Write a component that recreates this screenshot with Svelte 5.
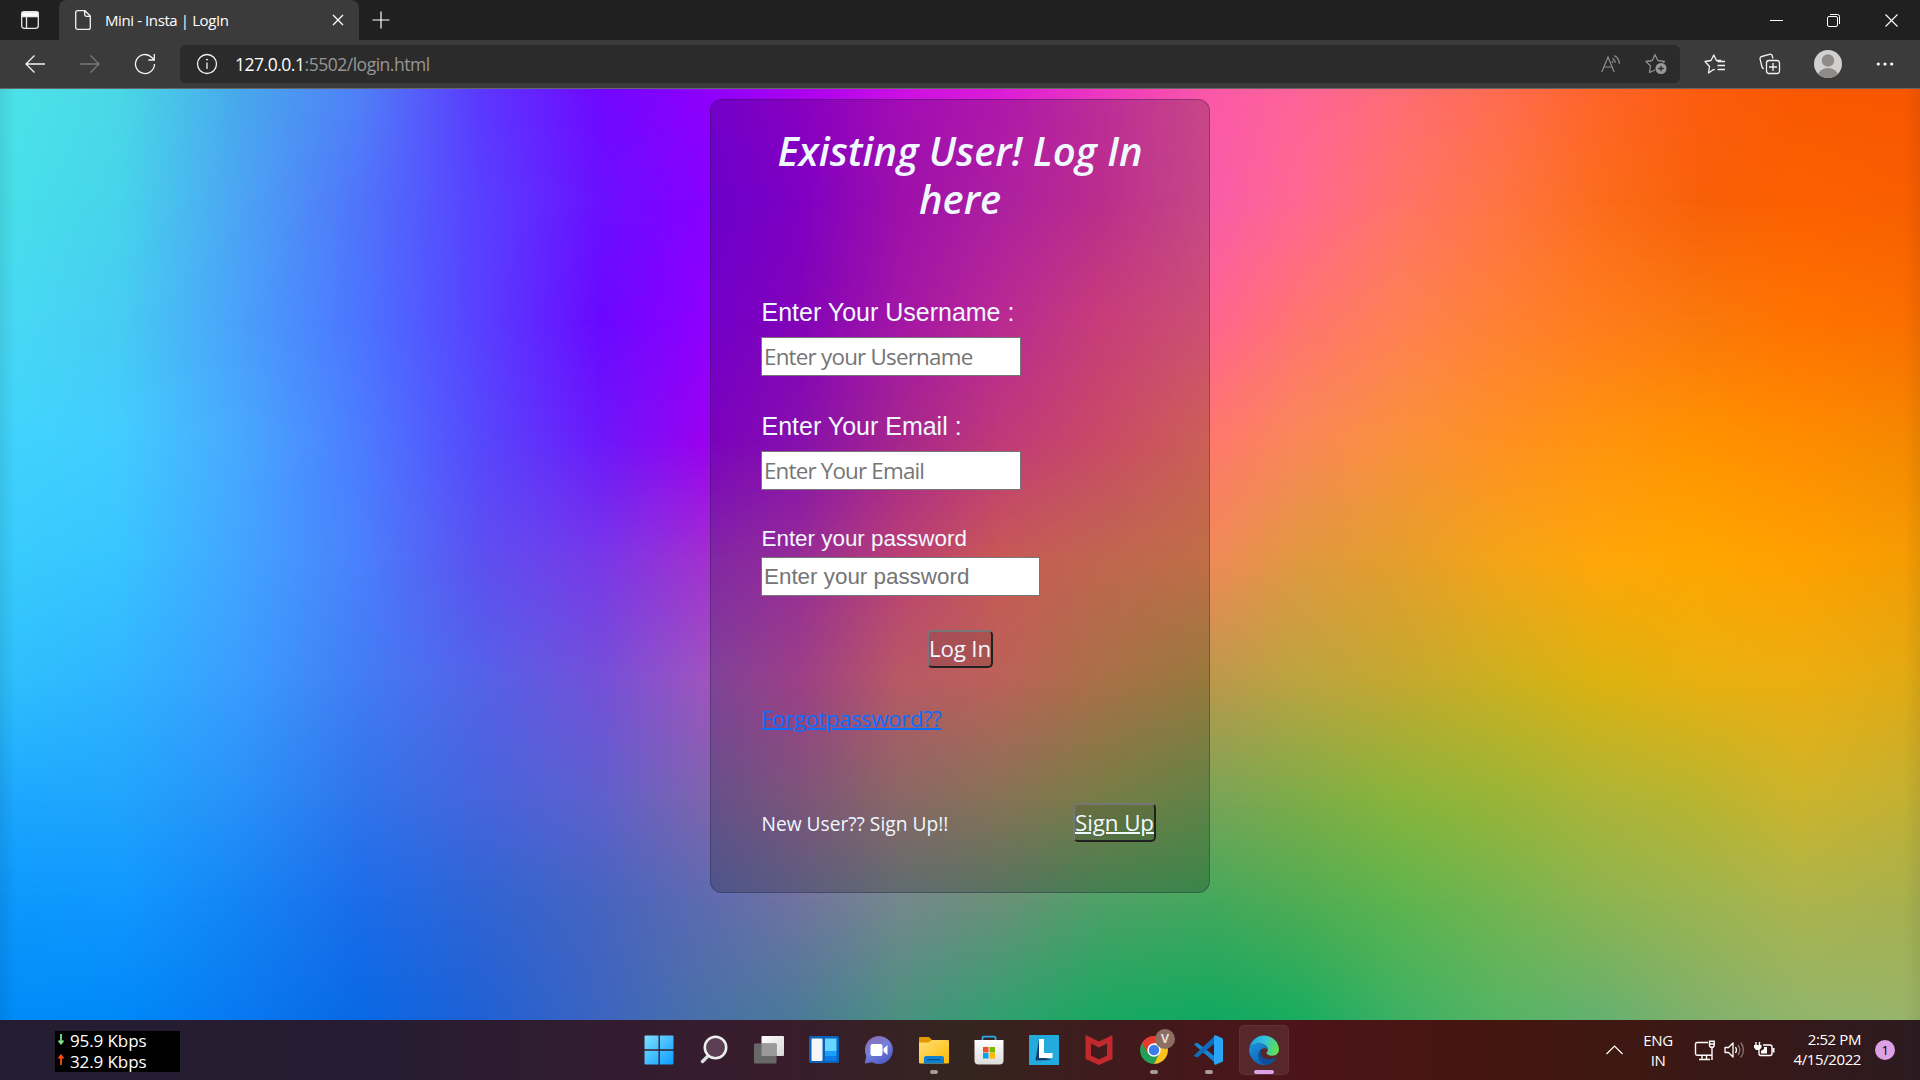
<script>
  // Colour mesh behind the form: every row is a horizontal gradient,
  // and consecutive rows are blended with vertical masks.
  const stopsX = [0, 120, 240, 360, 480, 600, 700, 800, 900, 1000, 1100, 1210, 1300, 1400, 1500, 1600, 1700, 1800, 1920];
  const mesh = [
    [0, '4ce4ea 4ad8e6 48a8ec 5080f8 5c38ff 7008ff 8c00fc ac00f0 cc10e4 dc1cd6 ec38c0 fc58a8 ff6498 ff6c74 ff6c50 ff6428 fc5c10 f85800 f85600'],
    [111, '48e0ea 46d4ea 4ca4f4 5074fa 5840ff 6a10ff 8400ff 9e00f4 c414d4 d828c8 ea38b0 f85ca8 ff6890 ff7468 ff7444 fc6c1c f86008 fc6000 f85e00'],
    [231, '48daf4 46ccf2 4aa0fa 4c74ff 5840ff 6a08ff 8c00ff a404e6 cc1cd0 e834b8 fa4c98 ff6490 ff7470 ff8054 ff8034 ff7c1c fa780c ff7200 fa6e00'],
    [351, '40d4fc 42ccff 48a8fe 4c7cff 5648fc 6c18fa 9800f0 a814d8 d030b0 f04898 fc5c80 ff786c fa8858 fa903c ff9022 ff940e ff9200 ff8c00 f48800'],
    [471, '38ccfc 38c4ff 42a4ff 4a80fc 5c50f0 7838e8 a030d0 bc38bc ea5090 fa706a f08064 f08a58 e09840 e49e2c f4a418 ffa60a ffa600 ffa000 f49c04'],
    [591, '2ec0fc 30b4ff 3a9cfe 427cf4 5462e8 7450d8 9c54c0 c450a8 e6707e ea7a6e d48c5a bc984c bca440 c4a830 ccb020 dcb210 e8b010 ecae10 e0aa14'],
    [711, '1ca8ff 20a4fc 2890f8 3074ea 4664dc 5e60cc 7c64ae 9c6a98 ac8280 a8906c 949c58 78a458 7cac48 88b43c 98b438 acb438 b8b430 ccb42c c2b034'],
    [811, '0c98fc 1098ff 1484f4 1c6cea 3064d4 4664c0 5c6ab0 7074a0 74888c 6a9078 4fa068 44a85c 50ac54 5eb44e 74b450 8cb450 9cb450 acb44c a8b04e'],
    [931, '008cf8 0088f8 0878f0 0868e4 2060d4 3c64c0 4870a8 4a7a98 4a9080 30a070 18a860 10a860 18ac60 3cb064 54b464 64b070 80b06c 90b46c 98b46a']
  ];
  const layers = mesh.map(([y, row], i) => {
    const bg = row.split(' ').map((c, k) => `#${c} ${stopsX[k]}px`).join(',');
    const mask = i ? `mask-image:linear-gradient(180deg,transparent ${mesh[i - 1][0]}px,#000 ${y}px)` : '';
    return `background:linear-gradient(90deg,${bg});${mask}`;
  });
</script>

<div class="screen">
  <header class="tabs">
    <div class="tabmenu">
      <svg width="18" height="18" viewBox="0 0 18 18" fill="none" stroke="#e8e8e8" stroke-width="1.3"><rect x=".7" y=".7" width="16.6" height="16.6" rx="2.5"/><path d="M1 1.5h16v4H1z" fill="#fff"/><path d="M5.5 5v12"/></svg>
    </div>
    <div class="tab">
      <svg width="16" height="20" viewBox="0 0 16 20" fill="none" stroke="#f2f2f2" stroke-width="1.3"><path d="M2.6.7H10l5.3 5.3v11.400a1.900 1.900 0 0 1-1.900 1.900H2.600A1.900 1.900 0 0 1 .7 17.400V2.600A1.900 1.900 0 0 1 2.600.7zM9.700.9v3.700c0 1 .7 1.700 1.700 1.700h3.700"/></svg>
      <span class="title">Mini - Insta | LogIn</span>
      <svg width="12" height="12" viewBox="0 0 12 12" stroke="#fff" stroke-width="1.3"><path d="M1 1l10 10M11 1L1 11"/></svg>
    </div>
    <div class="plus"><svg width="18" height="18" viewBox="0 0 18 18" stroke="#fff" stroke-width="1.2"><path d="M9 .5v17M.5 9h17"/></svg></div>
    <div class="win">
      <span><svg width="13" height="13" viewBox="0 0 13 13" stroke="#fff"><path d="M0 6.500h13"/></svg></span>
      <span><svg width="13" height="13" viewBox="0 0 13 13" stroke="#fff" fill="none"><rect x=".5" y="2.500" width="10" height="10" rx="1.500"/><path d="M3 .5h7.500a2 2 0 0 1 2 2V10"/></svg></span>
      <span><svg width="13" height="13" viewBox="0 0 13 13" stroke="#fff" stroke-width="1.100"><path d="M.5.5l12 12M12.500.5l-12 12"/></svg></span>
    </div>
  </header>

  <nav class="bar">
    <span class="ic"><svg width="20" height="18" viewBox="0 0 20 18" fill="none" stroke="#f4f4f4" stroke-width="1.300"><path d="M20 9H1M9.500.5L1 9l8.500 8.500"/></svg></span>
    <span class="ic"><svg width="20" height="18" viewBox="0 0 20 18" fill="none" stroke="#7a7a7a" stroke-width="1.300"><path d="M0 9h19M10.500.5L19 9l-8.500 8.500"/></svg></span>
    <span class="ic"><svg width="22" height="22" viewBox="0 0 22 22" fill="none" stroke="#f4f4f4" stroke-width="1.300"><path d="M20.500 11A9.500 9.500 0 1 1 17.600 4.200L20 6.600M20.300 1v6h-6"/></svg></span>
    <div class="addr">
      <svg class="info" width="22" height="22" viewBox="0 0 22 22" fill="none" stroke="#f0f0f0" stroke-width="1.300"><circle cx="11" cy="11" r="9.500"/><path d="M11 9.500V16"/><circle cx="11" cy="6.600" r=".6" fill="#fff" stroke-width=".8"/></svg>
      <span class="url"><b>127.0.0.1</b>:5502/login.html</span>
      <svg class="read" width="20" height="18" viewBox="0 0 20 18" fill="none" stroke="#8f8f8f" stroke-width="1.200"><path d="M.8 17L7 2l6.200 15M3 12h8M11.500 3.300c1.600 1 2.600 2.500 2.800 4.500M13.300.6c3 1.500 4.900 4.500 5.100 8.200M10.800 6c.7.500 1 1 1.200 2" /></svg>
      <svg width="22" height="22" viewBox="0 0 22 22" fill="none" stroke="#8f8f8f" stroke-width="1.300" stroke-linejoin="round"><path d="M10 17l-5.500 2.500 1-6.500L1 8.500l6.300-1L10 1.500l2.900 6 6.600 1-1.500 1.500"/><circle cx="16" cy="15.500" r="5.500" fill="#9a9a9a" stroke="none"/><path d="M16 12.700v5.600M13.200 15.500h5.600" stroke="#2b2b2b"/></svg>
    </div>
    <span class="ic fav"><svg width="22" height="20" viewBox="0 0 22 20" fill="none" stroke="#f2f2f2" stroke-width="1.300" stroke-linejoin="round"><path d="M11 16l-1.500-.5L4.500 19l1-6.500L1 7.500l6-1L9.800 1l2.600 5.500h4.800M13.500 7.500H21M13.500 11.500H21M13.500 15.500H21"/></svg></span>
    <span class="ic"><svg width="22" height="22" viewBox="0 0 22 22" fill="none" stroke="#f2f2f2" stroke-width="1.300"><rect x="7.500" y="7.500" width="13" height="13" rx="2.500"/><path d="M14 10v8M10 14h8M4.800 15.500a2 2 0 0 1-1.800-1.500L1.100 6.200A2.200 2.200 0 0 1 2.700 3.500L10.500 1.300a2.200 2.200 0 0 1 2.700 1.500L14 5.500"/></svg></span>
    <span class="ic wide"><svg width="28" height="28" viewBox="0 0 28 28"><defs><clipPath id="face"><circle cx="14" cy="14" r="14"/></clipPath></defs><g clip-path="url(#face)"><rect width="28" height="28" fill="#d2d0ce"/><circle cx="14" cy="10.500" r="6.200" fill="#8f8b88"/><ellipse cx="14" cy="26" rx="10" ry="8" fill="#8f8b88"/></g></svg></span>
    <span class="ic"><svg width="18" height="4" viewBox="0 0 18 4" fill="#fff"><circle cx="2.300" cy="2" r="1.600"/><circle cx="9" cy="2" r="1.600"/><circle cx="15.700" cy="2" r="1.600"/></svg></span>
  </nav>

  <main class="page">
    {#each layers as style}
      <div class="mesh" {style}></div>
    {/each}
    <div class="mesh edges"></div>
    <section class="card">
      <h1>Existing User! Log In<br />here</h1>
      <label class="big" for="user">Enter Your Username :</label>
      <input id="user" class="seg user" placeholder="Enter your Username" />
      <label class="big second" for="mail">Enter Your Email :</label>
      <input id="mail" class="seg mail" placeholder="Enter Your Email" />
      <label class="small" for="pass">Enter your password</label>
      <input id="pass" class="pass" type="password" placeholder="Enter your password" />
      <button class="login">Log In</button>
      <a class="forgot" href="#forgot">Forgotpassword??</a>
      <div class="signup">
        <span>New User?? Sign Up!!</span>
        <button class="up">Sign Up</button>
      </div>
    </section>
  </main>

  <footer class="task">
    <div class="left">
      <div class="net">
        <div><svg width="6" height="11" viewBox="0 0 6 11" fill="none" stroke="#7fe58a" stroke-width="1.800"><path d="M3 0v9M.5 6.500L3 9.500l2.500-3"/></svg>95.9 Kbps</div>
        <div><svg width="6" height="11" viewBox="0 0 6 11" fill="none" stroke="#ff4a12" stroke-width="1.800"><path d="M3 11V2M.5 4.500L3 1.500l2.500 3"/></svg>32.9 Kbps</div>
      </div>
    </div>
    <div class="apps">
      <span><svg width="30" height="30" viewBox="0 0 30 30"><defs><linearGradient id="w" x1="0" y1="0" x2="1" y2="1" ><stop stop-color="#7fe0ff"/><stop offset="1" stop-color="#0a9cff"/></linearGradient></defs><path fill="url(#w)" d="M1.500.5H15v14H.5v-13a1 1 0 0 1 1-1zM15.500.5h13a1 1 0 0 1 1 1v13h-14zM.5 15.500H15v14H1.500a1 1 0 0 1-1-1zM15.500 15.500h14v13a1 1 0 0 1-1 1h-13z"/><path d="M15.100 0v30M0 15h30" stroke="#331c30" stroke-width="1.200"/></svg></span>
      <span><svg width="30" height="30" viewBox="0 0 30 30" fill="none"><path d="M3.500 26.500l7.500-7.500" stroke="#d9dee0" stroke-width="3.400" stroke-linecap="round"/><circle cx="16.500" cy="12.500" r="10.700" fill="#5a3f55" stroke="#eceef0" stroke-width="2.600"/></svg></span>
      <span><svg width="30" height="30" viewBox="0 0 30 30"><defs><linearGradient id="tv" x1="0" y1="0" x2="1" y2="1"><stop stop-color="#fff"/><stop offset="1" stop-color="#d6d6d6"/></linearGradient></defs><rect x="7.500" y="1" width="22.500" height="20" rx="1" fill="url(#tv)"/><rect x="0" y="8.500" width="22.500" height="20" rx="1" fill="#686868"/><path d="M7.500 8.500h15v12.500h-15z" fill="#9a9a9a"/></svg></span>
      <span><svg width="30" height="30" viewBox="0 0 30 30"><rect y="1" width="30" height="27" rx="1.500" fill="#0b62b8"/><rect x="2.500" y="3.500" width="11" height="22.500" rx="1" fill="#f6f6f6"/><path d="M16 3.500h11.500V16H16z" fill="#66d4ff"/><path d="M16 16h11.500v5H16z" fill="#1aa0f8"/><path d="M16 21h11.500v5H16z" fill="#0a7de8"/></svg></span>
      <span><svg width="30" height="30" viewBox="0 0 30 30"><defs><linearGradient id="ch" x1=".2" y1="0" x2=".8" y2="1"><stop stop-color="#8f6bb4"/><stop offset=".45" stop-color="#7480d8"/><stop offset="1" stop-color="#4a58c8"/></linearGradient></defs><path d="M15 1a14 14 0 1 1-7 26.200L.8 28.500 2.300 21A14 14 0 0 1 15 1z" fill="url(#ch)"/><rect x="6.500" y="9" width="12" height="12" rx="2" fill="#fff"/><path d="M19.500 13.500L23.500 10v10l-4-3.500z" fill="#fff"/></svg></span>
      <span><svg width="30" height="30" viewBox="0 0 30 30"><defs><linearGradient id="fo" x1="0" y1="0" x2="1" y2="1"><stop stop-color="#ffdf78"/><stop offset="1" stop-color="#ffb900"/></linearGradient></defs><path d="M0 3a1 1 0 0 1 1-1h9l3 3-1 5H0z" fill="#e29a00"/><path d="M0 7.500h9.500L13 5h16a1 1 0 0 1 1 1v21.500a1 1 0 0 1-1 1H1a1 1 0 0 1-1-1z" fill="url(#fo)"/><path d="M5 28.500V23a2 2 0 0 1 2-2h16a2 2 0 0 1 2 2v5.500z" fill="#0f80d0"/><path d="M8 24.700h13" stroke="#0a4d90" stroke-width="1.200"/></svg><i></i></span>
      <span><svg width="30" height="30" viewBox="0 0 30 30"><defs><linearGradient id="st" x1="0" y1="0" x2="0" y2="1"><stop stop-color="#fff"/><stop offset="1" stop-color="#dcdcdc"/></linearGradient></defs><path d="M8.500 6V2.700A1 1 0 0 1 9.500 1.700h11a1 1 0 0 1 1 1V6" fill="none" stroke="#2aa8e8" stroke-width="1.800"/><path d="M.5 5h29v20.500a4 4 0 0 1-4 4h-21a4 4 0 0 1-4-4z" fill="url(#st)"/><path d="M9 12h5.500v5.500H9z" fill="#f04e23"/><path d="M15.500 12H21v5.500h-5.500z" fill="#7db800"/><path d="M9 18h5.500v5.500H9z" fill="#00a3ee"/><path d="M15.500 18H21v5.500h-5.500z" fill="#ffb700"/></svg></span>
      <span><svg width="30" height="30" viewBox="0 0 30 30"><path d="M0 0h30v30H0z" fill="#22abdc"/><path d="M10 4L6.500 25.500l16-.5L10 21z" fill="#173a6c"/><path d="M10 4h5v14h8.500v5H10z" fill="#fff"/></svg></span>
      <span><svg width="28" height="30" viewBox="0 0 28 30"><path d="M.5 0L14 6.500 27.500 0v24L14 30 .5 24zM6 8.500v12l8 4 8-4v-12l-8 4z" fill="#c1292e" fill-rule="evenodd"/></svg></span>
      <span><svg width="36" height="36" viewBox="0 0 36 36"><g transform="translate(4,4)"><path d="M14 14L1.900 7A14 14 0 0 1 26.100 7z" fill="#e33b2e"/><path d="M14 14L1.900 7A14 14 0 0 0 14 28l6-10.500z" fill="#23a055"/><path d="M14 14l5.500 3.500L14 28A14 14 0 0 0 26.100 7H14z" fill="#fcc31e"/><path d="M1.900 7A14 14 0 0 1 26.100 7H14a7 7 0 0 0-6 10.500z" fill="#e33b2e"/><circle cx="14" cy="14" r="6.700" fill="#fff"/><circle cx="14" cy="14" r="5.200" fill="#3b7bec"/></g></svg><em>V</em><i></i></span>
      <span><svg class="code" width="30" height="30" viewBox="0 0 30 30"><path d="M1 9.500l2-1.500q1-.6 2 .2L24 23v6.500z" fill="#1684d2" /><path d="M1 20.500L22 .5v7.500L5 22q-1 .7-2 0L.8 21z" fill="#0f6db8"/><path d="M22 0l7 3q1 .5 1 1.500v21q0 1-1 1.500l-7 3-1-1.500V1.500z" fill="#2aa4f4"/></svg><i></i></span>
      <span class="on"><svg width="30" height="30" viewBox="0 0 30 30"><defs><linearGradient id="e1" x1="0" y1=".3" x2="1" y2=".5"><stop stop-color="#1f9fe6"/><stop offset=".5" stop-color="#35c4d8"/><stop offset="1" stop-color="#62e04c"/></linearGradient><linearGradient id="e2" x1="0" y1="0" x2=".6" y2="1"><stop stop-color="#1b94e0"/><stop offset="1" stop-color="#0f62b4"/></linearGradient></defs><path d="M.3 13A15 15 0 0 1 30 14c0 4.500-3 6.700-6.500 6.700-3.700 0-6-1.400-6-2.700 0-.8 1.300-1.500 1.300-3.700C18.800 11 15 8.500 10.500 8.500 5 8.500 1 11 .3 13z" fill="url(#e1)"/><path d="M.2 13.500C1.500 10 5.500 8.500 10 8.500c5 0 8.500 2.500 8.700 5.500C12 11 7.500 18 11 23.500c1.700 2.700 4 5 7 6.200A15 15 0 0 1 .2 13.500z" fill="url(#e2)"/><path d="M12.200 14.500c-2.500 7 4 12.800 15.800 8A15 15 0 0 1 17 30C9 28 7 19 12.200 14.500z" fill="#0d4f9c"/></svg><i></i></span>
    </div>
    <div class="tray">
      <span class="up-arrow"><svg width="17" height="10" viewBox="0 0 17 10" fill="none" stroke="#fff" stroke-width="1.200"><path d="M.5 9l8-8 8 8"/></svg></span>
      <span class="lang">ENG<br />IN</span>
      <svg class="mon" width="22" height="21" viewBox="0 0 22 21" fill="none" stroke="#fff" stroke-width="1.400"><path d="M14 2.500H3.200A1.700 1.700 0 0 0 1.500 4.200v9.300a1.700 1.700 0 0 0 1.700 1.700H18M8 15.500v4M12.500 15.500v4M5 19.500h11M15.500 1.200h4.700v4.500l-1 1.500h-2.700l-1-1.500zM18 7v13M15.500 4h4.500"/></svg>
      <svg class="vol" width="21" height="18" viewBox="0 0 21 18" fill="none" stroke="#fff" stroke-width="1.300" stroke-linejoin="round"><path d="M1 6.500h3.500L9 2v14l-4.500-4.500H1z"/><path d="M11.500 6c1.200 1.800 1.200 4.200 0 6"/><path d="M14 4c2.200 3 2.200 7 0 10M16.700 1.500c3.600 4.500 3.600 10.500 0 15" stroke="#8a7572"/></svg>
      <svg class="bat" width="21" height="18" viewBox="0 0 21 18" fill="none" stroke="#fff" stroke-width="1.400"><path d="M9 4h7a2 2 0 0 1 2 2v6.500a2 2 0 0 1-2 2H7a2 2 0 0 1-2-2V9M2 1v4M5.500 1v4"/><path d="M0 4h7.500v2.500L5.500 9H2L0 6.500zM10 6h3v6.500H7V10l3-2z" fill="#fff" stroke="none"/><path d="M19.500 7v4.500" stroke-width="2"/></svg>
      <span class="clock">2:52 PM<br />4/15/2022</span>
      <span class="badge">1</span>
    </div>
  </footer>
</div>

<style>
  :global(body) { margin: 0; overflow: hidden; background: #202020; }
  .screen { width: 1920px; height: 1080px; display: flex; flex-direction: column; font-family: 'Open Sans', 'Noto Sans', sans-serif; overflow: hidden; }
  svg { display: block; flex: none; }
  span { white-space: nowrap; }

  .tabs { height: 40px; flex: none; background: #202020; display: flex; align-items: center; color: #fff; }
  .tabmenu { width: 59px; display: flex; justify-content: center; }
  .tab { width: 300px; height: 40px; box-sizing: border-box; background: #3b3b3b; border-radius: 8px 8px 0 0; display: flex; align-items: center; padding: 0 15px 0 16px; }
  .tab svg:last-child { margin-left: auto; }
  .title { font-size: 15px; letter-spacing: -.4px; margin: -1px 0 0 14px; }
  .plus { width: 44px; display: flex; justify-content: center; }
  .win { margin-left: auto; display: flex; }
  .win span { width: 57.500px; display: flex; justify-content: center; }

  .bar { height: 49px; box-sizing: border-box; flex: none; background: #3b3b3b; border-bottom: 1px solid #666; display: flex; align-items: center; padding-left: 7px; }
  .ic { width: 55px; flex: none; display: flex; justify-content: center; }
  .wide { width: 60px; }
  .fav { margin-left: 7.500px; }
  .addr { width: 1500px; height: 38px; margin-left: 8px; box-sizing: border-box; padding: 0 13px 0 16px; background: #2b2b2b; border-radius: 6px; display: flex; align-items: center; }
  .url { font-size: 17.500px; letter-spacing: -.48px; color: #979797; margin: -1px 0 0 17px; }
  .url b { font-weight: 400; color: #fff; }
  .read { margin-left: auto; margin-right: 24px; }

  .page { height: 931px; flex: none; position: relative; display: flex; justify-content: center; align-items: flex-start; }
  .mesh { position: absolute; inset: 0; }
  .edges { background: linear-gradient(90deg, rgba(0, 0, 0, .08), transparent 16px calc(100% - 16px), rgba(0, 0, 0, .06)); }
  .card { position: relative; width: 500px; height: 794px; margin-top: 10px; box-sizing: border-box; padding: 27px 53px 0 50px; border: 1px solid rgba(20, 20, 60, .3); border-radius: 12px; background: rgba(0, 0, 0, .2); display: flex; flex-direction: column; align-items: flex-start; color: #f0f8ff; }
  h1 { margin: 0 -3px 0 0; align-self: stretch; text-align: center; font-size: 40px; line-height: 48px; font-weight: 600; font-style: italic; white-space: nowrap; letter-spacing: -.02px; }
  label { padding-left: .5px; }
  .big { margin-top: 74px; font: 25px/30px 'Liberation Sans', Arial, sans-serif; }
  .second { margin-top: 35px; }
  .small { margin-top: 34px; font: 22.400px/30px 'Liberation Sans', Arial, sans-serif; }
  input { width: 260px; height: 39px; margin: 10px 0 0; box-sizing: border-box; padding: 1px 2px; border: 1px solid #767676; border-radius: 0; background: #fff; outline: none; }
  .seg { font: 22.400px 'Open Sans', sans-serif; }
  .user { letter-spacing: -.78px; }
  .mail { letter-spacing: -.82px; padding-bottom: 2px; }
  .pass { width: 279px; margin-top: 3px; font: 22.400px 'Liberation Sans', Arial, sans-serif; }
  input::placeholder { color: #757575; opacity: 1; }
  button { height: 38px; box-sizing: border-box; padding: 0 0 2px; border: 2px solid; border-color: #767676 #212121 #212121 #767676; border-radius: 5px; background: rgba(0, 0, 0, .1); color: #f0f8ff; font: 22.400px 'Open Sans', sans-serif; letter-spacing: -.2px; white-space: nowrap; }
  .login { width: 66px; margin: 34px 0 0 166px; }
  .forgot { margin-top: 36px; font-size: 22.400px; line-height: 30px; color: #0d6efd; letter-spacing: -.5px; text-decoration-thickness: 2px; }
  .signup { margin-top: 69px; align-self: stretch; display: flex; justify-content: space-between; align-items: center; font-size: 19.200px; letter-spacing: 0; }
  .signup span { padding: 1px 0 0 .5px; }
  .signup .up { width: 83px; height: 39px; padding-bottom: 1px; letter-spacing: -.1px; text-decoration: underline; text-decoration-thickness: 2px; }

  .task { flex: 1; display: grid; grid-template-columns: 631px 660px 1fr; align-items: center; background: linear-gradient(90deg, #241d31 0, #271c31 400px, #331c30 620px, #381c2c 780px, #35251f 960px, #401a1c 1120px, #4c1418 1300px, #441610 1500px, #3e1812 1620px, #361819 1780px, #2b1b20 1920px); color: #fff; }
  .left { padding-left: 55px; }
  .net { width: 125px; height: 41px; margin-top: 3px; background: #000; font-size: 17px; letter-spacing: -.1px; line-height: 20.500px; }
  .net div { display: flex; align-items: center; gap: 6px; padding-left: 3px; }
  .net svg { margin-top: -4px; }
  .apps { display: flex; }
  .apps span { position: relative; width: 55px; height: 60px; display: flex; align-items: center; justify-content: center; }
  .apps i { position: absolute; left: 24px; bottom: 6px; width: 8px; height: 4px; border-radius: 2px; background: #a8999b; }
  .apps em { position: absolute; left: 29px; top: 9px; width: 20px; height: 20px; border-radius: 50%; background: #8d6e63; color: #e8dfdc; font: 600 13px/20px Roboto, sans-serif; text-align: center; }
  .apps .on::before { content: ''; position: absolute; left: 3px; top: 5px; width: 50px; height: 50px; box-sizing: border-box; border-radius: 5px; background: rgba(255, 255, 255, .08); border: 1px solid rgba(255, 255, 255, .05); }
  .apps .on svg { position: relative; }
  .apps .on i { left: 18px; width: 20px; background: #dca0e4; }
  .apps .code { margin-right: 2px; }
  .tray { display: flex; align-items: center; font-size: 15px; line-height: 20px; letter-spacing: -.4px; }
  .up-arrow { margin-left: 315px; width: 18px; }
  .lang { width: 68px; text-align: center; }
  .mon { margin-left: 2px; }
  .vol { margin-left: 8px; }
  .bat { margin-left: 9px; }
  .clock { margin: -2px 0 0 auto; text-align: right; }
  .badge { width: 20px; height: 20px; margin: 0 25px 0 14px; border-radius: 50%; background: #dca0e4; color: #000; font-size: 13px; text-align: center; }
</style>
